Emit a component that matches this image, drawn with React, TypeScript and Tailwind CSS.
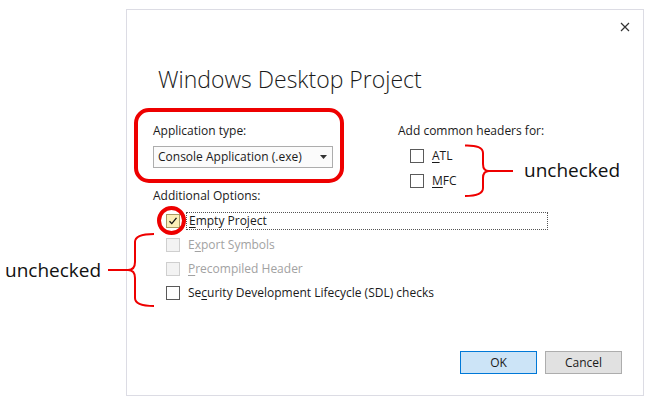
import React from 'react';

const FONT = { fontFamily: '"Open Sans", "Noto Sans", "Liberation Sans", sans-serif' };

function Check({ checked, disabled, focus }: { checked?: boolean; disabled?: boolean; focus?: boolean }) {
  const box = disabled
    ? 'border-[#cfcfcf] bg-[#f3f3f3]'
    : focus
    ? 'border-[#a89a63] bg-[#fbefb8]'
    : 'border-[#5a5a5a] bg-white';
  return (
    <div className={`w-[14px] h-[14px] border flex-shrink-0 flex items-center justify-center ${box}`}>
      {checked && (
        <svg width="10" height="10" viewBox="0 0 10 10">
          <path d="M1.5 5.2 L3.8 7.6 L8.5 1.8" fill="none" stroke="#111" strokeWidth="1.3" />
        </svg>
      )}
    </div>
  );
}

function Option({
  pre,
  key1,
  post,
  checked,
  disabled,
  focus,
}: {
  pre: string;
  key1: string;
  post: string;
  checked?: boolean;
  disabled?: boolean;
  focus?: boolean;
}) {
  return (
    <div className="h-[24px] flex items-center pl-[13px]">
      <Check checked={checked} disabled={disabled} focus={focus} />
      <div
        className={`ml-[6px] h-[18px] flex items-center pl-[2px] ${
          focus ? 'w-[362px] border border-dotted border-[#555]' : ''
        } ${disabled ? 'text-[#a2a2a2]' : 'text-[#1a1a1a]'}`}
      >
        <span>
          {pre}
          <span className="underline underline-offset-2">{key1}</span>
          {post}
        </span>
      </div>
    </div>
  );
}

export default function App() {
  return (
    <div className="relative w-[650px] h-[400px] bg-white overflow-hidden text-[12px]" style={FONT}>
      <div className="pt-[9px] pl-[126px]">
        {/* dialog */}
        <div className="w-[518px] h-[387px] border border-[#dcdce4] bg-white flex flex-col">
          <div className="h-[54px] flex justify-end pr-[13px] pt-[12px]">
            <svg width="10" height="10" viewBox="0 0 10 10">
              <path d="M1 1 L9 9 M9 1 L1 9" stroke="#333" strokeWidth="1.2" />
            </svg>
          </div>

          <div className="h-[30px] leading-[30px] pl-[31px] text-[23px] font-light text-[#1a1a1a]">
            Windows Desktop Project
          </div>

          <div className="h-[45px] flex pl-[26px] mt-[29px]">
            <div className="w-[245px] flex flex-col">
              <div className="h-[16px] leading-[16px] text-[#1a1a1a]">Application type:</div>
              <div className="mt-[7px] w-[180px] h-[22px] border border-[#adadad] bg-[#fbfbfb] flex items-center pl-[4px] pr-[5px] text-[#1a1a1a]">
                <span className="flex-1">Console Application (.exe)</span>
                <svg width="7" height="4" viewBox="0 0 7 4">
                  <path d="M0 0 L7 0 L3.5 4 Z" fill="#333" />
                </svg>
              </div>
            </div>
            <div className="flex flex-col">
              <div className="h-[16px] leading-[16px] text-[#1a1a1a]">Add common headers for:</div>
              <div className="mt-[10px] flex flex-col gap-[11px] pl-[12px]">
                <div className="h-[14px] flex items-center gap-[8px]">
                  <Check />
                  <span className="text-[#1a1a1a]">
                    <span className="underline underline-offset-2">A</span>TL
                  </span>
                </div>
                <div className="h-[14px] flex items-center gap-[8px]">
                  <Check />
                  <span className="text-[#1a1a1a]">
                    <span className="underline underline-offset-2">M</span>FC
                  </span>
                </div>
              </div>
            </div>
          </div>

          <div className="pl-[26px] mt-[20px]">
            <div className="h-[16px] leading-[16px] text-[#1a1a1a]">Additional Options:</div>
            <div className="mt-[5px]">
              <Option pre="" key1="E" post="mpty Project" checked focus />
              <Option pre="E" key1="x" post="port Symbols" disabled />
              <Option pre="" key1="P" post="recompiled Header" disabled />
              <Option pre="Se" key1="c" post="urity Development Lifecycle (SDL) checks" />
            </div>
          </div>

          <div className="mt-auto flex justify-end gap-[8px] pr-[21px] pb-[21px]">
            <button className="w-[77px] h-[23px] border border-[#0078d7] bg-[#cce4f7] text-[#1a1a1a]">OK</button>
            <button className="w-[77px] h-[23px] border border-[#adadad] bg-[#e1e1e1] text-[#1a1a1a]">Cancel</button>
          </div>
        </div>
      </div>

      {/* annotations */}
      <div className="absolute left-[134px] top-[108px] w-[210px] h-[75px] border-4 border-[#ee0000] rounded-[15px]" />
      <div className="absolute left-[157px] top-[206px] w-[29px] h-[29px] border-4 border-[#ee0000] rounded-full" />

      <svg className="absolute left-0 top-0" width="650" height="400" viewBox="0 0 650 400" fill="none">
        <path
          d="M465 145.5 Q483 145 483 153 L483 164 Q483 171 489 171 Q483 171 483 178 L483 188 Q483 196 465 196 M489 171 L513 171"
          stroke="#ee0000"
          strokeWidth="2"
        />
        <path
          d="M154 234 Q135 234 135 242 L135 262 Q135 270 128 270 Q135 270 135 278 L135 298 Q135 306 154 306 M128 270 L108 270"
          stroke="#ee0000"
          strokeWidth="2"
        />
      </svg>

      <div className="absolute left-[524px] top-[157px] text-[19px] leading-[26px] text-[#111]">unchecked</div>
      <div className="absolute left-[5px] top-[257px] text-[19px] leading-[26px] text-[#111]">unchecked</div>
    </div>
  );
}
